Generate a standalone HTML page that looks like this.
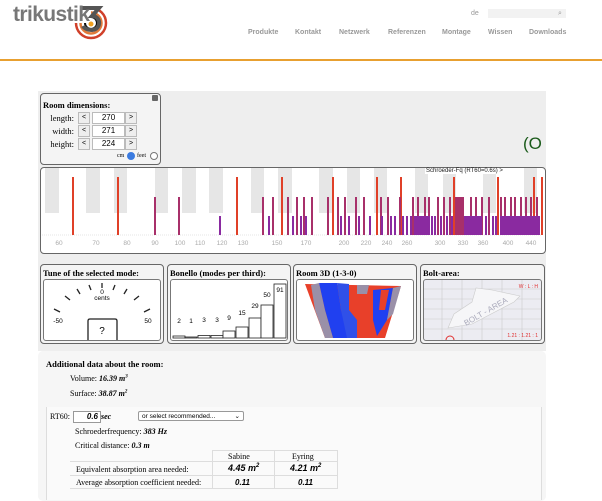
<!DOCTYPE html>
<html><head><meta charset="utf-8">
<style>
body{margin:0;width:602px;height:500px;overflow:hidden;background:#fff;font-family:"Liberation Serif",serif;position:relative}
.a{position:absolute}
.nav{font-family:"Liberation Sans",sans-serif;font-size:7px;font-weight:bold;color:#999;top:29px}
.box{position:absolute;border:1px solid #666;border-radius:4px;background:#f4f4f4}
.in{position:absolute;border:1px solid #777;border-radius:3px;background:#fff}
.t{font-weight:bold;font-size:8.5px;position:absolute;left:2px;top:3px}
.btn{position:absolute;width:10px;height:10px;border:1px solid #bbb;background:#eee;font-size:7px;text-align:center;line-height:10px;font-family:"Liberation Sans",sans-serif}
.inp{position:absolute;width:31px;height:10px;border:1px solid #bbb;background:#fff;font-size:8px;text-align:center;line-height:10px;font-family:"Liberation Sans",sans-serif}
.lb{position:absolute;font-size:8.5px;text-align:right;width:33px}
.s{font-size:8px;position:absolute}
</style></head><body>
<!-- header -->
<svg class="a" style="left:73px;top:4px" width="36" height="36" viewBox="0 0 36 36">
<circle cx="18" cy="19" r="15" fill="none" stroke="#d0402a" stroke-width="2.5"/>
<circle cx="18" cy="19" r="10.5" fill="none" stroke="#e07a3a" stroke-width="2.5"/>
<circle cx="18" cy="19" r="6" fill="#fff" stroke="#111" stroke-width="2"/>
<rect x="0" y="0" width="18" height="19" fill="#fff"/>
<path d="M9 4 H26 L19 12 C28 12 29 25 19 26 C14 26 11 24 10 22" fill="none" stroke="#555" stroke-width="4"/>
<circle cx="18" cy="20" r="2.5" fill="#f0a020"/>
</svg>
<div class="a" style="left:13px;top:3px;font-family:'Liberation Sans',sans-serif;font-size:21px;font-weight:bold;color:#777;letter-spacing:-0.6px">trikustik</div>
<div class="a" style="left:471px;top:10px;font-family:'Liberation Sans',sans-serif;font-size:7px;color:#999">de</div>
<div class="a" style="left:488px;top:9px;width:78px;height:9px;background:#f2f2f2"></div>
<div class="a" style="left:558px;top:9px;font-size:7px;color:#999">⌕</div>
<div class="a nav" style="left:248px">Produkte</div>
<div class="a nav" style="left:295px">Kontakt</div>
<div class="a nav" style="left:339px">Netzwerk</div>
<div class="a nav" style="left:388px">Referenzen</div>
<div class="a nav" style="left:442px">Montage</div>
<div class="a nav" style="left:488px">Wissen</div>
<div class="a nav" style="left:529px">Downloads</div>
<div class="a" style="left:0;top:59px;width:602px;height:2px;background:#e8a030"></div>

<!-- main panel -->
<div class="a" style="left:38px;top:91px;width:508px;height:260px;background:#eeeeee"></div>

<!-- room dims -->
<div class="box" style="left:40px;top:93px;width:119px;height:70px;background:#f4f4f4">
<div class="t" style="top:6px">Room dimensions:</div>
<div class="a" style="right:2px;top:1px;width:6px;height:6px;background:#666;border-radius:1px"></div>
<div class="lb" style="left:0;top:19px">length:</div><div class="btn" style="left:37px;top:18px">&lt;</div><div class="inp" style="left:51px;top:18px">270</div><div class="btn" style="left:84px;top:18px">&gt;</div>
<div class="lb" style="left:0;top:32px">width:</div><div class="btn" style="left:37px;top:31px">&lt;</div><div class="inp" style="left:51px;top:31px">271</div><div class="btn" style="left:84px;top:31px">&gt;</div>
<div class="lb" style="left:0;top:45px">height:</div><div class="btn" style="left:37px;top:44px">&lt;</div><div class="inp" style="left:51px;top:44px">224</div><div class="btn" style="left:84px;top:44px">&gt;</div>
<div class="a" style="left:76px;top:59px;font-size:6px">cm</div>
<div class="a" style="left:86px;top:58px;width:6px;height:6px;border-radius:50%;background:#3b7be0;border:1px solid #3b7be0"></div>
<div class="a" style="left:96px;top:59px;font-size:6px">feet</div>
<div class="a" style="left:109px;top:58px;width:6px;height:6px;border-radius:50%;border:1px solid #777;background:#fff"></div>
</div>
<div class="a" style="left:523px;top:134px;font-family:'Liberation Sans',sans-serif;font-size:17px;color:#1a5a1a">(O</div>

<!-- chart -->
<div class="box" style="left:40px;top:167px;width:504px;height:85px;background:#fff"></div>
<svg class="a" style="left:0;top:0" width="602" height="260" id="ch"></svg>
<div class="a" style="left:425px;top:168px;font-family:'Liberation Sans',sans-serif;font-size:6px;color:#222;background:#fff;padding:0 1px">Schroeder-Fq (RT60=0.6s) &gt;</div>

<!-- four boxes -->
<div class="box" style="left:40px;top:264px;width:122px;height:78px"><div class="t">Tune of the selected mode:</div>
<div class="in" style="left:2px;top:14px;width:116px;height:60px">
<svg width="116" height="60">
<g stroke="#222" stroke-width="1.3">
<line x1="10" y1="29" x2="16" y2="32"/><line x1="21" y1="16" x2="26" y2="20"/><line x1="33" y1="9" x2="36" y2="14"/><line x1="45" y1="5" x2="47" y2="10"/><line x1="58" y1="3" x2="58" y2="8"/><line x1="71" y1="5" x2="69" y2="10"/><line x1="83" y1="9" x2="80" y2="14"/><line x1="95" y1="16" x2="90" y2="20"/><line x1="106" y1="29" x2="100" y2="32"/>
</g>
<text x="58" y="14" font-size="6.5" font-family="Liberation Sans" text-anchor="middle">0</text>
<text x="58" y="20" font-size="6.5" font-family="Liberation Sans" text-anchor="middle">cents</text>
<text x="14" y="43" font-size="6.5" font-family="Liberation Sans" text-anchor="middle">-50</text>
<text x="104" y="43" font-size="6.5" font-family="Liberation Sans" text-anchor="middle">50</text>
<path d="M44 60 V41 Q44 39 46 39 H71 Q73 39 73 41 V60" fill="none" stroke="#222" stroke-width="1.3"/>
<text x="58" y="54" font-size="10" font-family="Liberation Sans" text-anchor="middle">?</text>
</svg></div></div>

<div class="box" style="left:167px;top:264px;width:122px;height:78px"><div class="t">Bonello (modes per third):</div>
<div class="in" style="left:2px;top:14px;width:116px;height:60px">
<svg width="116" height="60" font-family="Liberation Sans" font-size="6.5" text-anchor="middle">
<g fill="#fff" stroke="#222" stroke-width="0.8">
<rect x="2" y="56" width="12" height="2"/><rect x="14" y="57" width="12" height="1"/><rect x="27" y="55.5" width="12" height="2.5"/><rect x="40" y="55.5" width="12" height="2.5"/><rect x="52" y="51" width="12" height="7"/><rect x="65" y="47" width="12" height="11"/><rect x="78" y="38" width="12" height="20"/><rect x="90" y="25" width="12" height="33"/><rect x="103" y="4" width="12" height="54"/>
</g>
<text x="8" y="43">2</text><text x="20" y="43">1</text><text x="33" y="42">3</text><text x="46" y="42">3</text><text x="58" y="40">9</text><text x="71" y="35">15</text><text x="84" y="28">29</text><text x="96" y="17">50</text><text x="109" y="12">91</text>
</svg></div></div>

<div class="box" style="left:293px;top:264px;width:122px;height:78px"><div class="t">Room 3D (1-3-0)</div>
<div class="in" style="left:2px;top:14px;width:116px;height:60px;overflow:hidden">
<svg width="116" height="60">
<polygon points="8,4 104,6 88,58 28,58" fill="#e8402a"/>
<polygon points="22,3 40,3 44,30 52,58 36,58 28,30" fill="#2040f0"/>
<polygon points="40,3 52,4 52,30 60,40 60,58 50,58 44,30" fill="#3050e8"/>
<polygon points="14,5 22,3 28,30 36,58 28,58 18,30" fill="#9a90a8"/>
<polygon points="60,5 72,5 70,14 60,14" fill="#9a90a8"/>
<polygon points="76,10 96,8 90,40 80,56 76,40" fill="#2040f0"/>
<polygon points="84,10 92,10 88,30 82,30" fill="#e8402a"/>
<polygon points="96,8 104,6 96,34 90,40" fill="#9a90a8"/>
</svg></div></div>

<div class="box" style="left:420px;top:264px;width:123px;height:78px"><div class="t">Bolt-area:</div>
<div class="in" style="left:2px;top:14px;width:117px;height:60px;background:#ececf2;overflow:hidden">
<svg width="117" height="60">
<g stroke="#ccc" stroke-width="0.6">
<line x1="0" y1="9" x2="117" y2="9"/><line x1="0" y1="19" x2="117" y2="19"/><line x1="0" y1="29" x2="117" y2="29"/><line x1="0" y1="39" x2="117" y2="39"/><line x1="0" y1="49" x2="117" y2="49"/>
<line x1="18" y1="0" x2="18" y2="60"/><line x1="38" y1="0" x2="38" y2="60"/><line x1="58" y1="0" x2="58" y2="60"/><line x1="78" y1="0" x2="78" y2="60"/><line x1="98" y1="0" x2="98" y2="60"/>
</g>
<path d="M24 48 L30 34 L48 22 L52 8 L68 10 L96 16 L90 22 L48 44 Z" fill="#f6f6f8" stroke="#ccc" stroke-width="0.6"/>
<text x="42" y="46" font-size="8" font-family="Liberation Sans" fill="#aab" transform="rotate(-30 42 46)">BOLT - AREA</text>
<text x="114" y="8" font-size="5" font-family="Liberation Sans" fill="#e03030" text-anchor="end">W : L : H</text>
<text x="114" y="57" font-size="5" font-family="Liberation Sans" fill="#e03030" text-anchor="end">1.21 : 1.21 : 1</text>
<circle cx="26" cy="60" r="4" fill="none" stroke="#e03030"/>
</svg></div></div>

<!-- additional data -->
<div class="a" style="left:38px;top:351px;width:508px;height:150px;background:#f6f6f6;border-radius:5px"></div>
<div class="a" style="left:46px;top:359px;font-size:8.5px;font-weight:bold">Additional data about the room:</div>
<div class="s" style="left:70px;top:374px">Volume: <b><i>16.39 m<sup style="font-size:5px">3</sup></i></b></div>
<div class="s" style="left:70px;top:389px">Surface: <b><i>38.87 m<sup style="font-size:5px">2</sup></i></b></div>
<div class="a" style="left:46px;top:407px;width:494px;height:93px;border-left:1px solid #ddd;border-right:1px solid #ddd;background:#fafafa"></div>
<div class="s" style="left:50px;top:412px">RT60:</div>
<div class="a" style="left:73px;top:411px;width:24px;height:10px;border:1px solid #999;background:#fff;font:bold italic 8px 'Liberation Sans',sans-serif;text-align:right;line-height:10px;padding-right:2px;box-sizing:content-box">0.6</div>
<div class="s" style="left:101px;top:412px"><b><i>sec</i></b></div>
<div class="a" style="left:138px;top:411px;width:106px;height:10px;border:1px solid #999;border-radius:2px;background:#fff;font:6.5px 'Liberation Sans',sans-serif;line-height:10px;padding-left:3px;box-sizing:border-box">or select recommended...<span style="position:absolute;right:3px">⌄</span></div>
<div class="s" style="left:75px;top:427px">Schroederfrequency: <b><i>383 Hz</i></b></div>
<div class="s" style="left:75px;top:441px">Critical distance: <b><i>0.3 m</i></b></div>
<div class="a" style="left:212px;top:450px;width:126px;height:1px;background:#ddd"></div>
<div class="a" style="left:274px;top:450px;width:1px;height:38px;background:#ddd"></div>
<div class="a" style="left:212px;top:450px;width:1px;height:38px;background:#ddd"></div>
<div class="a" style="left:337px;top:450px;width:1px;height:38px;background:#ddd"></div>
<div class="a" style="left:70px;top:461px;width:268px;height:1px;background:#ddd"></div>
<div class="a" style="left:70px;top:475px;width:268px;height:1px;background:#ddd"></div>
<div class="a" style="left:70px;top:488px;width:268px;height:1px;background:#ddd"></div>
<div class="s" style="left:228px;top:452px">Sabine</div>
<div class="s" style="left:292px;top:452px">Eyring</div>
<div class="s" style="left:76px;top:465px">Equivalent absorption area needed:</div>
<div class="s" style="left:76px;top:478px">Average absorption coefficient needed:</div>
<div class="a" style="left:228px;top:463px;font:bold italic 9px 'Liberation Sans',sans-serif">4.45 m<sup style="font-size:6px">2</sup></div>
<div class="a" style="left:290px;top:463px;font:bold italic 9px 'Liberation Sans',sans-serif">4.21 m<sup style="font-size:6px">2</sup></div>
<div class="a" style="left:235px;top:478px;font:bold italic 8px 'Liberation Sans',sans-serif">0.11</div>
<div class="a" style="left:298px;top:478px;font:bold italic 8px 'Liberation Sans',sans-serif">0.11</div>

<script>
var s='',g=[[45,59],[86,100],[114,127],[155,168],[182,196],[209,223],[251,264],[278,292],[319,333],[347,360],[374,387],[415,428],[443,456],[483,496],[524,537]];
g.forEach(function(b){s+='<rect x="'+b[0]+'" y="168" width="'+(b[1]-b[0])+'" height="45" fill="#e6e6e6"/>';});
s+='<line x1="42" y1="235" x2="542" y2="235" stroke="#ccc" stroke-width="0.6" stroke-dasharray="1,1"/>';
var L=[[59,60],[96,70],[127,80],[155,90],[180,100],[200,110],[222,120],[243,130],[277,150],[306,170],[344,200],[366,220],[387,240],[407,260],[440,300],[463,330],[483,360],[508,400],[531,440]];
L.forEach(function(l){s+='<text x="'+l[0]+'" y="245" font-size="6.5" font-family="Liberation Sans" fill="#aaa" text-anchor="middle">'+l[1]+'</text>';});
function bar(x,t,c,w){s+='<rect x="'+x+'" y="'+t+'" width="'+(w||2)+'" height="'+(235-t)+'" fill="'+c+'"/>';}
var R='#e04028',M='#a8306a',P='#8a2aa0';
[72,117,236,281,332,376,400,453,497,533,541].forEach(function(x){bar(x,177,R);});
[154,178,262,272,287,296,303,311,327,337,344,355,363,380,387,399,412,417,424,428,437,443,449,456,462,470,475,481,488,500,504,510,514,520,525,530,536].forEach(function(x){bar(x,197,M);});
[219,268,292,300,305,340,348,358,369,381,390,394,402,406,410,414,420,426,431,434,440,446,451,458,464,468,473,478,485,492,495,502,507,512,517,522,528,538].forEach(function(x){bar(x,216,P);});
bar(416,216,P,14);bar(466,216,P,16);bar(500,216,P,38);bar(455,197,M,8);
document.getElementById('ch').innerHTML=s;
</script>
</body></html>
